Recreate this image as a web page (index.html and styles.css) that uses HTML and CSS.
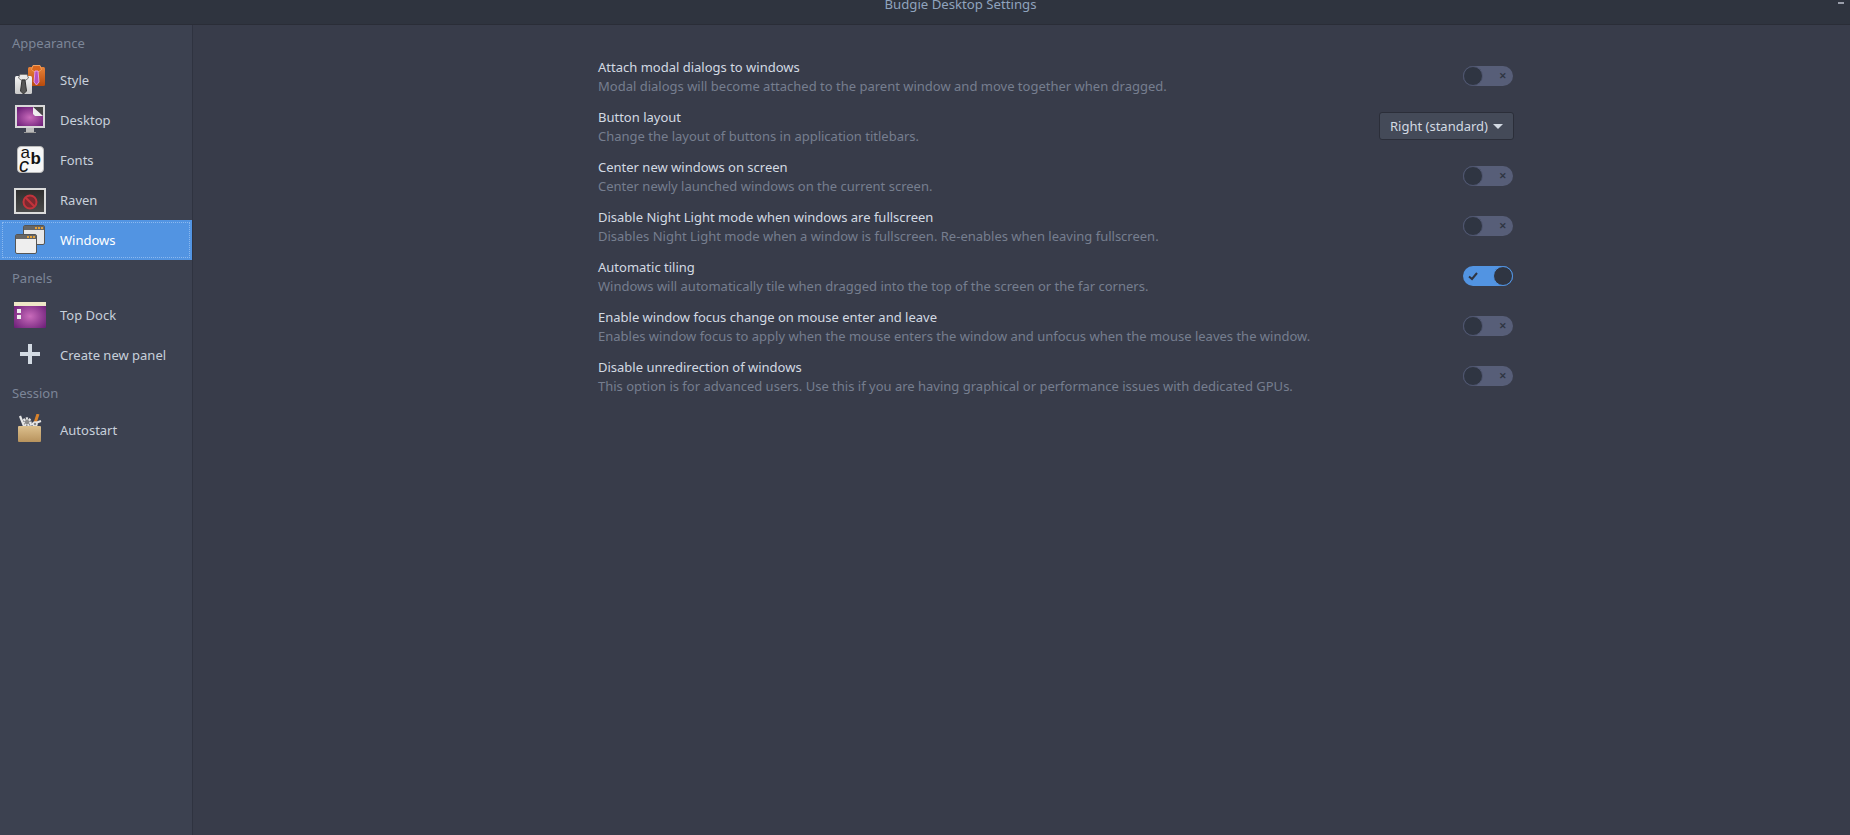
FILE: index.html
```html
<!DOCTYPE html>
<html lang="en">
<head>
    <meta charset="UTF-8">
    <title>Budgie Desktop Settings</title>
    <link rel="stylesheet" href="styles.css">
</head>
<body>
    <header class="titlebar">
        <span class="title">Budgie Desktop Settings</span>
        <span class="minimize"></span>
    </header>
    <div class="main">
        <nav class="sidebar">
            <div class="section">Appearance</div>
            <div class="item">
                <svg class="icon" viewBox="0 0 32 32">
                    <defs>
                        <linearGradient id="orange" x1="0" y1="0" x2="0" y2="1">
                            <stop offset="0" stop-color="#e8843a"/>
                            <stop offset="1" stop-color="#b84a0c"/>
                        </linearGradient>
                        <linearGradient id="shirt" x1="0" y1="0" x2="0" y2="1">
                            <stop offset="0" stop-color="#f4f4f4"/>
                            <stop offset="1" stop-color="#c9c9c9"/>
                        </linearGradient>
                    </defs>
                    <rect x="14" y="3" width="17" height="19" rx="1.5" fill="url(#orange)"/>
                    <path d="M17.5 5.5 L19 1.5 H26 L27.5 5.5 L25 7.5 H20Z" fill="#d9661c" stroke="#f0a060"/>
                    <path d="M21 7 H24 L25 18 L22.5 21 L20 18Z" fill="#b44fc0" stroke="#e39ae8"/>
                    <rect x="1" y="12" width="17" height="18" rx="1.5" fill="url(#shirt)"/>
                    <path d="M4.5 14 L6 10.5 H13 L14.5 14 L12 16 H7Z" fill="#e8e8e8" stroke="#777"/>
                    <path d="M8 16 H11 L12.5 27 L9.5 30 L6.5 27Z" fill="#555" stroke="#333"/>
                </svg>
                <span>Style</span>
            </div>
            <div class="item">
                <svg class="icon" viewBox="0 0 32 32">
                    <defs>
                        <radialGradient id="purple" cx="50%" cy="55%" r="65%">
                            <stop offset="0" stop-color="#c96bbb"/>
                            <stop offset="1" stop-color="#6c1f78"/>
                        </radialGradient>
                    </defs>
                    <rect x="1" y="1" width="30" height="23" fill="#d8d8d8"/>
                    <rect x="3" y="3" width="26" height="19" fill="url(#purple)"/>
                    <path d="M19 3 H29 V12 Z" fill="#444"/>
                    <path d="M19 3 L29 12 H21 L19 10Z" fill="#eee"/>
                    <rect x="12" y="24" width="8" height="4" fill="#bbb"/>
                    <rect x="10" y="28" width="12" height="1" fill="#999"/>
                </svg>
                <span>Desktop</span>
            </div>
            <div class="item">
                <svg class="icon" viewBox="0 0 32 32">
                    <rect x="3.5" y="2.5" width="26" height="26" rx="3.5" fill="#f6f6f6" stroke="#bbb"/>
                    <text class="glyph"><tspan x="6.5" y="14">a</tspan><tspan x="16.5" y="20" class="bold">b</tspan><tspan x="5" y="28" class="italic">c</tspan></text>
                </svg>
                <span>Fonts</span>
            </div>
            <div class="item">
                <svg class="icon" viewBox="0 0 32 32">
                    <defs>
                        <linearGradient id="screen" x1="0" y1="0" x2="0" y2="1">
                            <stop offset="0" stop-color="#2e2e2e"/>
                            <stop offset="1" stop-color="#4a4a4a"/>
                        </linearGradient>
                    </defs>
                    <rect x="0" y="4" width="32" height="26" fill="#dcdcdc"/>
                    <rect x="2" y="6" width="28" height="22" fill="url(#screen)"/>
                    <circle cx="16" cy="18" r="6.5" fill="#7a2a30" stroke="#c2343c" stroke-width="2"/>
                    <path d="M11.5 13.5 L20.5 22.5" stroke="#c2343c" stroke-width="2.2"/>
                </svg>
                <span>Raven</span>
            </div>
            <div class="item active">
                <svg class="icon" viewBox="0 0 32 32">
                    <rect x="9.5" y="1.5" width="21" height="19" rx="1.5" fill="#e8e8e8" stroke="#555"/>
                    <rect x="10" y="2" width="20" height="4" fill="#666"/>
                    <rect x="21" y="3" width="2" height="2" fill="#e5a23a"/>
                    <rect x="24" y="3" width="2" height="2" fill="#e5a23a"/>
                    <rect x="27" y="3" width="2" height="2" fill="#e5a23a"/>
                    <rect x="1.5" y="10.5" width="21" height="19" rx="1.5" fill="#eee" stroke="#555"/>
                    <rect x="2" y="11" width="20" height="4" fill="#666"/>
                    <rect x="13" y="12" width="2" height="2" fill="#e5a23a"/>
                    <rect x="16" y="12" width="2" height="2" fill="#e5a23a"/>
                    <rect x="19" y="12" width="2" height="2" fill="#e5a23a"/>
                </svg>
                <span>Windows</span>
            </div>
            <div class="section">Panels</div>
            <div class="item">
                <svg class="icon" viewBox="0 0 32 32">
                    <rect x="0" y="3" width="32" height="26" rx="1" fill="url(#purple)"/>
                    <rect x="0" y="3" width="32" height="4" fill="#eee8c8"/>
                    <rect x="3" y="10" width="4" height="4" fill="#eee"/>
                    <rect x="3" y="16" width="4" height="4" fill="#eee"/>
                </svg>
                <span>Top Dock</span>
            </div>
            <div class="item">
                <svg class="icon" viewBox="0 0 32 32">
                    <rect x="14" y="5" width="4" height="20" fill="#d3dae3"/>
                    <rect x="6" y="13" width="20" height="4" fill="#d3dae3"/>
                </svg>
                <span>Create new panel</span>
            </div>
            <div class="section">Session</div>
            <div class="item">
                <svg class="icon" viewBox="0 0 32 32">
                    <defs>
                        <linearGradient id="box" x1="0" y1="0" x2="0" y2="1">
                            <stop offset="0" stop-color="#dcc08e"/>
                            <stop offset="1" stop-color="#b8935d"/>
                        </linearGradient>
                    </defs>
                    <path d="M24 0 L21 9" stroke="#d9822b" stroke-width="3"/>
                    <path d="M6 2 L10 12 M27 7 L16 11" stroke="#e6e6e6" stroke-width="2.2"/>
                    <circle cx="13" cy="8" r="3.5" fill="#8a8a8a" stroke="#e6e6e6" stroke-width="2.5" stroke-dasharray="2 1"/>
                    <circle cx="21" cy="10" r="2" fill="#8a8a8a" stroke="#e6e6e6" stroke-width="1.5"/>
                    <rect x="4" y="12" width="23" height="16" rx="1" fill="url(#box)"/>
                </svg>
                <span>Autostart</span>
            </div>
        </nav>
        <section class="content">
            <div class="settings">
                <div class="row">
                    <div class="text">
                        <div class="name">Attach modal dialogs to windows</div>
                        <div class="desc">Modal dialogs will become attached to the parent window and move together when dragged.</div>
                    </div>
                    <div class="switch"><span class="knob"></span><span class="mark">&#x2715;</span></div>
                </div>
                <div class="row">
                    <div class="text">
                        <div class="name">Button layout</div>
                        <div class="desc">Change the layout of buttons in application titlebars.</div>
                    </div>
                    <div class="combo">Right (standard)<span class="arrow"></span></div>
                </div>
                <div class="row">
                    <div class="text">
                        <div class="name">Center new windows on screen</div>
                        <div class="desc">Center newly launched windows on the current screen.</div>
                    </div>
                    <div class="switch"><span class="knob"></span><span class="mark">&#x2715;</span></div>
                </div>
                <div class="row">
                    <div class="text">
                        <div class="name">Disable Night Light mode when windows are fullscreen</div>
                        <div class="desc">Disables Night Light mode when a window is fullscreen. Re-enables when leaving fullscreen.</div>
                    </div>
                    <div class="switch"><span class="knob"></span><span class="mark">&#x2715;</span></div>
                </div>
                <div class="row">
                    <div class="text">
                        <div class="name">Automatic tiling</div>
                        <div class="desc">Windows will automatically tile when dragged into the top of the screen or the far corners.</div>
                    </div>
                    <div class="switch on">
                        <svg class="check" viewBox="0 0 10 10"><path d="M1 5.5 L4 8 L9 2" fill="none" stroke="#2f3542" stroke-width="2"/></svg>
                        <span class="knob"></span>
                    </div>
                </div>
                <div class="row">
                    <div class="text">
                        <div class="name">Enable window focus change on mouse enter and leave</div>
                        <div class="desc">Enables window focus to apply when the mouse enters the window and unfocus when the mouse leaves the window.</div>
                    </div>
                    <div class="switch"><span class="knob"></span><span class="mark">&#x2715;</span></div>
                </div>
                <div class="row">
                    <div class="text">
                        <div class="name">Disable unredirection of windows</div>
                        <div class="desc">This option is for advanced users. Use this if you are having graphical or performance issues with dedicated GPUs.</div>
                    </div>
                    <div class="switch"><span class="knob"></span><span class="mark">&#x2715;</span></div>
                </div>
            </div>
        </section>
    </div>
</body>
</html>
```

FILE: styles.css
```css
html, body {
    height: 100%;
}

body {
    margin: 0;
    font-family: "Noto Sans", sans-serif;
    font-size: 13px;
    line-height: 18px;
    color: #d3dae3;
    background-color: #383c4a;
    display: flex;
    flex-direction: column;
    overflow: hidden;
}

.titlebar {
    height: 24px;
    flex: none;
    background-color: #2f343f;
    border-bottom: 1px solid #2a2d37;
    display: flex;
    justify-content: center;
    padding-left: 71px;
    position: relative;
    overflow: hidden;
}

.title {
    font-size: 13.2px;
    line-height: 14px;
    margin-top: -3px;
    color: #8fa3bd;
}

.minimize {
    position: absolute;
    right: 6px;
    top: 2px;
    width: 6px;
    height: 2px;
    background-color: #9a9eaa;
}

.main {
    flex: 1;
    display: flex;
    min-height: 0;
}

.sidebar {
    width: 192px;
    flex: none;
    background-color: #3c4150;
    border-right: 1px solid #2f3340;
}

.section {
    color: #7c8698;
    height: 35px;
    box-sizing: border-box;
    padding: 9px 12px 0;
}

.item {
    height: 40px;
    display: flex;
    align-items: center;
    padding-left: 14px;
    color: #c8d0db;
}

.item span {
    margin-left: 14px;
}

.item.active {
    background-color: #5294e2;
    color: #fff;
    outline: 1px dotted #8bb8ee;
    outline-offset: -3px;
}

.icon {
    width: 32px;
    height: 32px;
    flex: none;
}

.glyph {
    font-family: "Liberation Sans", sans-serif;
    font-size: 17px;
    fill: #111;
}

.glyph .bold {
    font-weight: bold;
}

.glyph .italic {
    font-style: italic;
    font-size: 20px;
}

.content {
    flex: 1;
}

.settings {
    width: 916px;
    margin-left: 405px;
    padding-top: 26px;
}

.row {
    height: 50px;
    display: flex;
    align-items: center;
    justify-content: space-between;
}

.text {
    padding-top: 1px;
}

.name {
    color: #d3dae3;
    line-height: 19px;
}

.desc {
    color: #767e8f;
    line-height: 19px;
}

.switch {
    position: relative;
    width: 50px;
    height: 20px;
    margin-right: 1px;
    border-radius: 10px;
    background-color: #575e78;
    flex: none;
}

.knob {
    position: absolute;
    left: 0;
    top: 0;
    width: 18px;
    height: 18px;
    border-radius: 50%;
    border: 1px solid #4f5670;
    background-color: #2f3542;
}

.mark {
    position: absolute;
    right: 6px;
    top: 0;
    font-size: 9px;
    line-height: 20px;
    font-weight: bold;
    color: #2f3542;
}

.switch.on {
    background-color: #5294e2;
}

.switch.on .knob {
    left: auto;
    right: 0;
    border-color: #5294e2;
}

.check {
    position: absolute;
    left: 5px;
    top: 5px;
    width: 10px;
    height: 10px;
}

.combo {
    width: 135px;
    height: 28px;
    box-sizing: border-box;
    border: 1px solid #2b2e39;
    border-radius: 3px;
    background-color: #444a58;
    color: #d3dae3;
    display: flex;
    align-items: center;
    padding-left: 10px;
}

.arrow {
    margin-left: 5px;
    border-left: 5px solid transparent;
    border-right: 5px solid transparent;
    border-top: 5px solid #d3dae3;
}
```
